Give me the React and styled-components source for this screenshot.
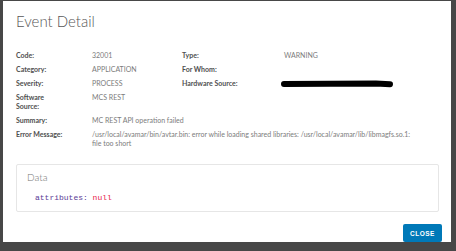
import React from 'react';
import styled, { createGlobalStyle } from 'styled-components';

const GlobalStyle = createGlobalStyle`
  html, body {
    margin: 0;
    padding: 0;
    background: #474747;
  }
  * {
    box-sizing: border-box;
  }
`;

const Backdrop = styled.div`
  width: 456px;
  height: 251px;
  padding: 1px 5px 9px 3px;
  background: #474747;
  font-family: Lato, 'Open Sans', sans-serif;
`;

const Modal = styled.div`
  display: flex;
  flex-direction: column;
  width: 448px;
  height: 241px;
  padding: 10px 9px 13px 13px;
  background: #fff;
`;

const Title = styled.h2`
  margin: 0;
  font-size: 15px;
  line-height: 20px;
  font-weight: 300;
  color: #565656;
`;

const Fields = styled.div`
  display: grid;
  grid-template-columns: 76px 90px 102px 1fr;
  row-gap: 5px;
  margin-top: 20px;
  font-size: 7px;
  line-height: 9px;
`;

const Label = styled.div`
  font-weight: 700;
  color: #4f4f4f;
  width: ${(p) => (p.$narrow ? '40px' : 'auto')};
`;

const Value = styled.div`
  color: #7c7c7c;
  grid-column: ${(p) => (p.$wide ? '2 / 5' : 'auto')};
`;

const Redaction = styled.svg`
  display: block;
  margin: 1px 0 0 -4px;
`;

const DataPanel = styled.section`
  margin: 16px 3px 0 0;
  padding: 6px 10px 7px;
  border: 1px solid #e6e6e6;
  border-radius: 2px;
`;

const PanelTitle = styled.div`
  font-size: 10px;
  line-height: 12px;
  font-weight: 300;
  color: #747474;
`;

const Code = styled.pre`
  margin: 9px 0 0 8px;
  font-family: 'Liberation Mono', 'DejaVu Sans Mono', monospace;
  font-size: 8px;
  line-height: 12px;
  color: #5b3b96;
`;

const Null = styled.span`
  color: #e8214a;
`;

const Footer = styled.div`
  display: flex;
  justify-content: flex-end;
  margin-top: 12px;
`;

const Button = styled.button`
  width: 39px;
  height: 18px;
  padding: 0;
  border: none;
  border-radius: 2px;
  background: #0079b8;
  color: #fff;
  font-family: 'Liberation Sans', Arial, sans-serif;
  font-size: 6.5px;
  font-weight: 700;
  letter-spacing: 0.5px;
`;

const fields = [
  ['Code:', '32001', 'Type:', 'WARNING'],
  ['Category:', 'APPLICATION', 'For Whom:', ''],
  ['Severity:', 'PROCESS', 'Hardware Source:', 'redacted'],
  ['Software Source:', 'MCS REST', '', ''],
];

export default function App() {
  return (
    <>
      <GlobalStyle />
      <Backdrop>
        <Modal>
          <Title>Event Detail</Title>
          <Fields>
            {fields.map(([l1, v1, l2, v2]) => (
              <React.Fragment key={l1}>
                <Label $narrow>{l1}</Label>
                <Value>{v1}</Value>
                <Label>{l2}</Label>
                <Value>
                  {v2 === 'redacted' ? (
                    <Redaction width="114" height="8" viewBox="0 0 114 8">
                      <path
                        d="M4 4 L96 3.6 L110 4.2"
                        stroke="#000"
                        strokeWidth="6"
                        strokeLinecap="round"
                        fill="none"
                      />
                    </Redaction>
                  ) : (
                    v2
                  )}
                </Value>
              </React.Fragment>
            ))}
            <Label>Summary:</Label>
            <Value $wide>MC REST API operation failed</Value>
            <Label>Error Message:</Label>
            <Value $wide>
              /usr/local/avamar/bin/avtar.bin: error while loading shared libraries:
              /usr/local/avamar/lib/libmagfs.so.1:
              <br />
              file too short
            </Value>
          </Fields>
          <DataPanel>
            <PanelTitle>Data</PanelTitle>
            <Code>
              attributes: <Null>null</Null>
            </Code>
          </DataPanel>
          <Footer>
            <Button>CLOSE</Button>
          </Footer>
        </Modal>
      </Backdrop>
    </>
  );
}
